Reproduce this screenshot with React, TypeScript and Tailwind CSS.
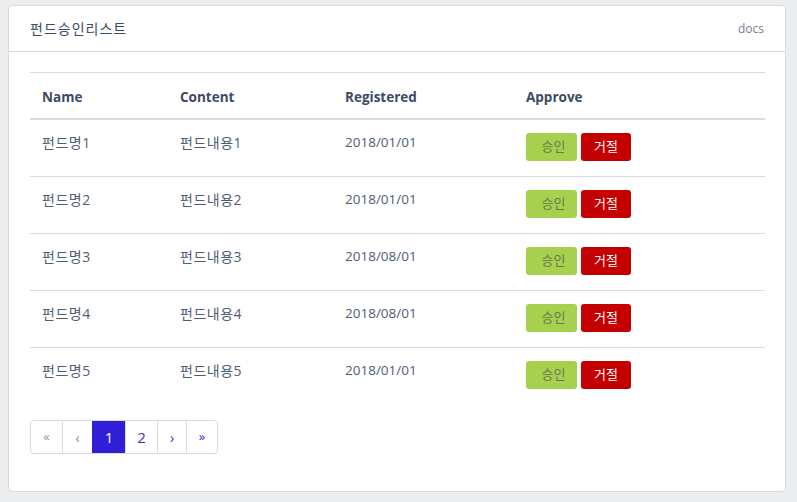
import React from 'react';

// Fund approval rows
const funds = [
  { name: '펀드명1', content: '펀드내용1', registered: '2018/01/01' },
  { name: '펀드명2', content: '펀드내용2', registered: '2018/01/01' },
  { name: '펀드명3', content: '펀드내용3', registered: '2018/08/01' },
  { name: '펀드명4', content: '펀드내용4', registered: '2018/08/01' },
  { name: '펀드명5', content: '펀드내용5', registered: '2018/01/01' },
];

const pages = [
  { label: '«', active: false, disabled: true, w: 'w-[31px]', size: 'text-[13px]' },
  { label: '‹', active: false, disabled: true, w: 'w-[30px]', size: 'text-[14px]' },
  { label: '1', active: true, disabled: false, w: 'w-[33px]', size: 'text-[15px]' },
  { label: '2', active: false, disabled: false, w: 'w-[32px]', size: 'text-[15px]' },
  { label: '›', active: false, disabled: false, w: 'w-[29px]', size: 'text-[14px]' },
  { label: '»', active: false, disabled: false, w: 'w-[31px]', size: 'text-[13px]' },
];

const App = () => {
  return (
    <div
      className="min-h-[502px] bg-[#ebedef] pt-[5px] pl-[8px] pr-[11px] pb-[10px] text-[#3c4b64]"
      style={{ fontFamily: '"Open Sans", "Noto Sans CJK KR", sans-serif' }}
    >
      <div className="bg-white border border-[#d8dbe0] rounded-[4px]">
        {/* Card header */}
        <div className="flex items-center justify-between h-[46px] px-[21px] border-b border-[#d8dbe0]">
          <span className="text-[14px] tracking-[1px] text-[#3c4b64]">펀드승인리스트</span>
          <span className="text-[12px] text-[#768192]">docs</span>
        </div>

        {/* Card body */}
        <div className="px-[21px] pt-[20px] pb-[21px]">
          <table className="w-[735px] border-collapse text-[14px]">
            <thead>
              <tr className="border-t border-[#d8dbe0] border-b-2 border-b-[#d8dbe0]">
                <th className="w-[138px] text-left font-bold text-[13.5px] leading-[21px] px-3 pt-[14px] pb-[10px]">Name</th>
                <th className="w-[165px] text-left font-bold text-[13.5px] leading-[21px] px-3 pt-[14px] pb-[10px]">Content</th>
                <th className="w-[181px] text-left font-bold text-[13.5px] leading-[21px] px-3 pt-[14px] pb-[10px]">Registered</th>
                <th className="text-left font-bold text-[13.5px] leading-[21px] px-3 pt-[14px] pb-[10px]">Approve</th>
              </tr>
            </thead>
            <tbody>
              {funds.map((f, i) => (
                <tr key={i} className={i < funds.length - 1 ? 'border-b border-[#d8dbe0]' : ''}>
                  <td className="px-3 pt-[12px] align-top leading-[21px] tracking-[0.5px] text-[#4f5d73]">{f.name}</td>
                  <td className="px-3 pt-[12px] align-top leading-[21px] tracking-[0.5px] text-[#4f5d73]">{f.content}</td>
                  <td className="px-3 pt-[12px] align-top leading-[21px] text-[13.5px] text-[#4f5d73]">{f.registered}</td>
                  <td className="px-3 pt-[13px] pb-[15px] align-top">
                    <div className="flex gap-[4px]">
                      <button className="w-[51px] h-[28px] pl-[4px] rounded-[3px] bg-[#a8d04f] text-[13px] text-[#66784f]">
                        승인
                      </button>
                      <button className="w-[50px] h-[28px] rounded-[3px] bg-[#c40000] text-[13px] text-white">
                        거절
                      </button>
                    </div>
                  </td>
                </tr>
              ))}
            </tbody>
          </table>

          {/* Pagination */}
          <div className="mt-[16px] mb-[16px] flex">
            <div className="flex border border-[#d8dbe0] rounded-[4px] overflow-hidden h-[34px]">
              {pages.map((p, i) => (
                <div
                  key={i}
                  className={
                    'flex items-center justify-center ' +
                    p.w +
                    ' ' +
                    p.size +
                    (i > 0 ? ' border-l border-[#d8dbe0]' : '') +
                    (p.active
                      ? ' bg-[#2f1fd6] text-white border-l-[#2f1fd6]'
                      : p.disabled
                      ? ' text-[#8a93a2]'
                      : ' text-[#3a2fc0]')
                  }
                >
                  {p.label}
                </div>
              ))}
            </div>
          </div>
        </div>
      </div>
    </div>
  );
};

export default App;
